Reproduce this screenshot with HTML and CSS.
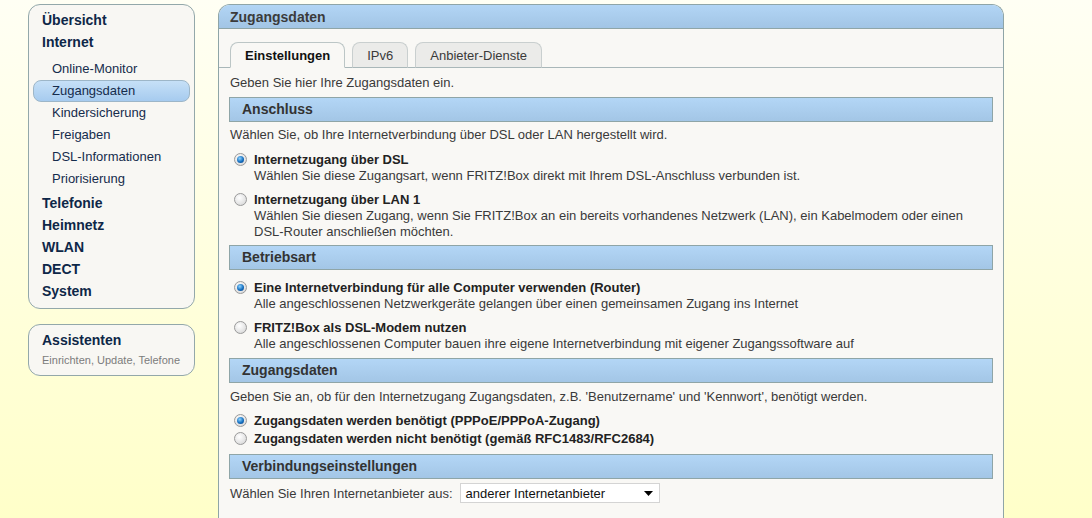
FILE: index.html
```
<!DOCTYPE html>
<html lang="de">
<head>
    <meta charset="UTF-8">
    <title>FRITZ!Box - Zugangsdaten</title>
    <link rel="stylesheet" href="styles.css">
</head>
<body>
    <div class="page">
        <div class="sidebar">
            <div class="navbox">
                <a class="nav-main">Übersicht</a>
                <a class="nav-main">Internet</a>
                <div class="subnav">
                    <a class="nav-sub">Online-Monitor</a>
                    <a class="nav-sub active">Zugangsdaten</a>
                    <a class="nav-sub">Kindersicherung</a>
                    <a class="nav-sub">Freigaben</a>
                    <a class="nav-sub">DSL-Informationen</a>
                    <a class="nav-sub">Priorisierung</a>
                </div>
                <a class="nav-main">Telefonie</a>
                <a class="nav-main">Heimnetz</a>
                <a class="nav-main">WLAN</a>
                <a class="nav-main">DECT</a>
                <a class="nav-main">System</a>
            </div>
            <div class="navbox assist">
                <a class="nav-main">Assistenten</a>
                <div class="assist-sub">Einrichten, Update, Telefone</div>
            </div>
        </div>

        <div class="panel">
            <div class="panel-head">Zugangsdaten</div>
            <div class="tabs">
                <div class="tab active">Einstellungen</div>
                <div class="tab">IPv6</div>
                <div class="tab">Anbieter-Dienste</div>
            </div>
            <div class="content">
                <p class="intro">Geben Sie hier Ihre Zugangsdaten ein.</p>

                <div class="section-head">Anschluss</div>
                <p class="hint">Wählen Sie, ob Ihre Internetverbindung über DSL oder LAN hergestellt wird.</p>
                <div class="options">
                    <div class="option">
                        <span class="radio checked"></span>
                        <div>
                            <div class="label">Internetzugang über DSL</div>
                            <div class="desc">Wählen Sie diese Zugangsart, wenn FRITZ!Box direkt mit Ihrem DSL-Anschluss verbunden ist.</div>
                        </div>
                    </div>
                    <div class="option">
                        <span class="radio"></span>
                        <div>
                            <div class="label">Internetzugang über LAN 1</div>
                            <div class="desc">Wählen Sie diesen Zugang, wenn Sie FRITZ!Box an ein bereits vorhandenes Netzwerk (LAN), ein Kabelmodem oder einen<br>DSL-Router anschließen möchten.</div>
                        </div>
                    </div>
                </div>

                <div class="section-head">Betriebsart</div>
                <div class="options after-head">
                    <div class="option">
                        <span class="radio checked"></span>
                        <div>
                            <div class="label">Eine Internetverbindung für alle Computer verwenden (Router)</div>
                            <div class="desc">Alle angeschlossenen Netzwerkgeräte gelangen über einen gemeinsamen Zugang ins Internet</div>
                        </div>
                    </div>
                    <div class="option">
                        <span class="radio"></span>
                        <div>
                            <div class="label">FRITZ!Box als DSL-Modem nutzen</div>
                            <div class="desc">Alle angeschlossenen Computer bauen ihre eigene Internetverbindung mit eigener Zugangssoftware auf</div>
                        </div>
                    </div>
                </div>

                <div class="section-head">Zugangsdaten</div>
                <p class="hint wide">Geben Sie an, ob für den Internetzugang Zugangsdaten, z.B. 'Benutzername' und 'Kennwort', benötigt werden.</p>
                <div class="options compact">
                    <div class="option">
                        <span class="radio checked"></span>
                        <div class="label">Zugangsdaten werden benötigt (PPPoE/PPPoA-Zugang)</div>
                    </div>
                    <div class="option">
                        <span class="radio"></span>
                        <div class="label">Zugangsdaten werden nicht benötigt (gemäß RFC1483/RFC2684)</div>
                    </div>
                </div>

                <div class="section-head">Verbindungseinstellungen</div>
                <div class="provider">
                    <span>Wählen Sie Ihren Internetanbieter aus:</span>
                    <div class="select">
                        <span>anderer Internetanbieter</span>
                        <svg width="9" height="5" viewBox="0 0 9 5"><path d="M0 0h9L4.5 5z" fill="#000"/></svg>
                    </div>
                </div>
            </div>
        </div>
    </div>
</body>
</html>
```

FILE: styles.css
```
* {
    box-sizing: border-box;
    margin: 0;
    padding: 0;
}

html {
    overflow: hidden;
}

body {
    font-family: "Liberation Sans", Arial, sans-serif;
    font-size: 13px;
    color: #3a3a3a;
    min-height: 518px;
    background: linear-gradient(#fffff4, #ffffc9) fixed;
}

.page {
    display: flex;
    align-items: flex-start;
    gap: 23px;
    padding: 4px 0 0 28px;
}

/* linke Navigation */
.sidebar {
    width: 167px;
    display: flex;
    flex-direction: column;
    gap: 15px;
}

.navbox {
    background: #f8f7f3;
    border: 1px solid #93a8aa;
    border-radius: 12px;
    padding: 4px 4px 6px 4px;
    display: flex;
    flex-direction: column;
}

.nav-main {
    font-size: 14px;
    font-weight: bold;
    color: #0e2748;
    line-height: 22px;
    padding-left: 9px;
}

.subnav {
    display: flex;
    flex-direction: column;
    margin: 5px 0 2px;
}

.nav-sub {
    color: #152c4c;
    line-height: 22px;
    padding-left: 19px;
}

.nav-sub.active {
    line-height: 20px;
    border: 1px solid #9db6c8;
    border-radius: 8px;
    padding-left: 18px;
    background: linear-gradient(#c6e0f7, #a6cbef);
}

.assist {
    padding: 5px 4px 5px 4px;
}

.assist .nav-main {
    line-height: 20px;
}

.assist-sub {
    font-size: 11px;
    color: #7c7c7c;
    line-height: 20px;
    padding-left: 9px;
}

/* Hauptbereich */
.panel {
    width: 786px;
    border: 1px solid #8fa5a7;
    border-bottom: none;
    border-radius: 12px 12px 0 0;
    background: #f9f8f5;
}

.panel-head {
    height: 24px;
    line-height: 24px;
    padding-left: 11px;
    font-size: 14px;
    font-weight: bold;
    color: #3b3b3b;
    border-radius: 11px 11px 0 0;
    border-bottom: 1px solid #8fa5a7;
    background: linear-gradient(#b2d5f5, #a2c5e5);
}

.tabs {
    display: flex;
    gap: 7px;
    padding: 13px 0 0 11px;
    border-bottom: 1px solid #a9b7b9;
}

.tab {
    height: 26px;
    line-height: 26px;
    padding: 0 14px;
    margin-bottom: -1px;
    border: 1px solid #c9cfcf;
    border-bottom: 1px solid #a9b7b9;
    border-radius: 8px 8px 0 0;
    background: #ebebe9;
    color: #3a3a3a;
    text-align: center;
}

.tab.active {
    background: #f9f8f5;
    border-color: #bcc6c6;
    border-bottom-color: #f9f8f5;
    font-weight: bold;
    color: #111;
}

.content {
    display: flex;
    flex-direction: column;
    padding: 0 10px 40px 10px;
}

.intro {
    line-height: 16px;
    margin-top: 7px;
    padding-left: 1px;
}

.section-head {
    height: 25px;
    line-height: 23px;
    margin-top: 6px;
    padding-left: 12px;
    font-size: 14px;
    font-weight: bold;
    color: #333;
    border: 1px solid #8fa5a7;
    background: linear-gradient(#b3d6f6, #a3c6e6);
}

.hint {
    line-height: 16px;
    margin-top: 5px;
    padding-left: 1px;
}

.hint.wide {
    margin-top: 6px;
}

.options {
    display: flex;
    flex-direction: column;
    gap: 8px;
    margin-top: 9px;
    margin-bottom: -1px;
}

.options.after-head {
    margin-top: 10px;
    margin-bottom: 0;
}

.options.compact {
    gap: 2px;
    margin-top: 8px;
    margin-bottom: 1px;
}

.option {
    display: flex;
    align-items: flex-start;
    gap: 7px;
    padding-left: 5px;
    line-height: 16px;
}

.label {
    font-weight: bold;
    color: #222;
}

.desc {
    color: #3a3a3a;
}

.radio {
    flex: none;
    width: 13px;
    height: 13px;
    margin-top: 1px;
    border-radius: 50%;
    border: 1px solid #9a9a9a;
    background: radial-gradient(circle at 40% 35%, #ffffff, #e4e4e4 60%, #cfcfcf);
    display: flex;
    align-items: center;
    justify-content: center;
}

.radio.checked::after {
    content: "";
    width: 7px;
    height: 7px;
    border-radius: 50%;
    background: radial-gradient(circle at 40% 35%, #8fd4ff, #1670c0 55%, #083a7c);
}

.provider {
    display: flex;
    align-items: center;
    gap: 7px;
    margin-top: 4px;
    padding-left: 1px;
}

.select {
    width: 200px;
    height: 20px;
    display: flex;
    align-items: center;
    justify-content: space-between;
    padding: 0 6px 0 5px;
    background: #fff;
    border: 1px solid #d4d4d4;
    color: #111;
}
```
